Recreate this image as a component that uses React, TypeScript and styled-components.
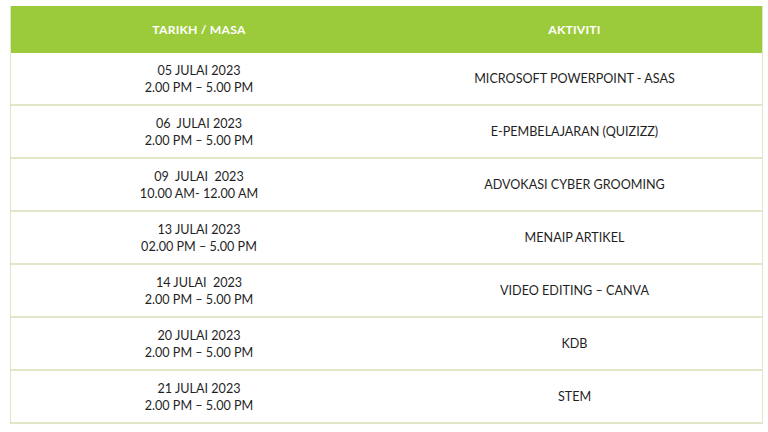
import { createGlobalStyle } from 'styled-components';
import styled from 'styled-components';

const schedule = [
  { date: '05 JULAI 2023', time: '2.00 PM – 5.00 PM', activity: 'MICROSOFT POWERPOINT - ASAS' },
  { date: '06  JULAI 2023', time: '2.00 PM – 5.00 PM', activity: 'E-PEMBELAJARAN (QUIZIZZ)' },
  { date: '09  JULAI  2023', time: '10.00 AM- 12.00 AM', activity: 'ADVOKASI CYBER GROOMING' },
  { date: '13 JULAI 2023', time: '02.00 PM – 5.00 PM', activity: 'MENAIP ARTIKEL' },
  { date: '14 JULAI  2023', time: '2.00 PM – 5.00 PM', activity: 'VIDEO EDITING – CANVA' },
  { date: '20 JULAI 2023', time: '2.00 PM – 5.00 PM', activity: 'KDB' },
  { date: '21 JULAI 2023', time: '2.00 PM – 5.00 PM', activity: 'STEM' },
];

export default function App() {
  return (
    <>
      <GlobalStyle />
      <Page>
        <Table>
          <HeaderRow>
            <HeaderCell>TARIKH / MASA</HeaderCell>
            <HeaderCell>AKTIVITI</HeaderCell>
          </HeaderRow>
          {schedule.map(({ date, time, activity }) => (
            <Row key={date}>
              <Cell>
                <Line>{date}</Line>
                <Line>{time}</Line>
              </Cell>
              <Cell>
                <Line>{activity}</Line>
              </Cell>
            </Row>
          ))}
        </Table>
      </Page>
    </>
  );
}

const GlobalStyle = createGlobalStyle`
  html, body {
    margin: 0;
    background: #ffffff;
  }
`;

const Page = styled.div`
  width: 768px;
  height: 432px;
  padding: 6px 5px 0 10px;
  box-sizing: border-box;
  font-family: Lato, 'Open Sans', sans-serif;
  color: #1f1f1f;
`;

const Table = styled.div`
  display: flex;
  flex-direction: column;
  border-left: 1px solid #dfe4c4;
  border-right: 1px solid #dfe4c4;
`;

const HeaderRow = styled.div`
  display: grid;
  grid-template-columns: 376px 1fr;
  height: 47px;
  background: #9bcb3b;
`;

const HeaderCell = styled.div`
  display: flex;
  align-items: center;
  justify-content: center;
  color: #ffffff;
  font-weight: 700;
  font-size: 12.2px;
  letter-spacing: 0.2px;
`;

const Row = styled.div`
  display: grid;
  grid-template-columns: 376px 1fr;
  height: 53px;
  box-sizing: border-box;
  border-bottom: 2px solid #e2e7c9;
`;

const Cell = styled.div`
  display: flex;
  flex-direction: column;
  align-items: center;
  justify-content: center;
  font-size: 12.6px;
  line-height: 17px;
`;

const Line = styled.span`
  white-space: pre;
`;
